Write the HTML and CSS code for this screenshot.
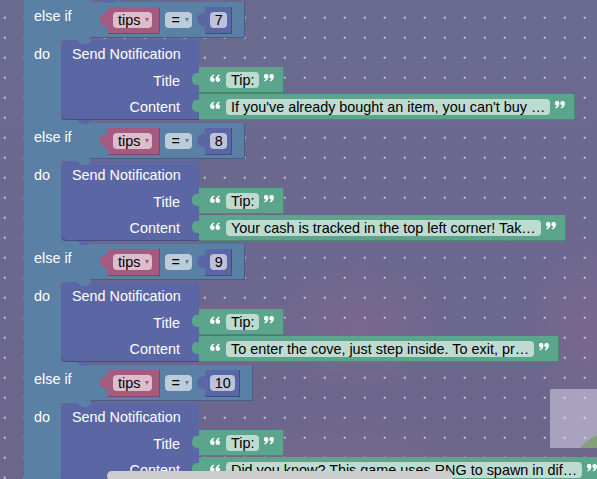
FILE: index.html
```html
<!DOCTYPE html>
<html>
<head>
<meta charset="utf-8">
<link rel="stylesheet" href="styles.css">
</head>
<body>
<div class="workspace">
  <div class="backdrop">
    <div class="hill-panel"><div class="hill"></div></div>
  </div>
  <div class="grid"></div>

  <div class="program">
    <div class="elseif first">
      <div class="head">else if</div>
      <div class="compare">
        <div class="var"><div class="field">tips<span class="arrow"></span></div></div>
        <div class="field op">=<span class="arrow"></span></div>
        <div class="num"><div class="field">7</div></div>
      </div>
    </div>
    <div class="do">
      <div class="spine">do</div>
      <div class="notify">
        <div class="notify-body">
          <div class="notify-title">Send Notification</div>
          <div class="label">Title</div>
          <div class="label">Content</div>
        </div>
        <div class="inputs">
          <div class="text"><svg class="q" viewBox="0 0 10 8"><path d="M0.1 5.6C0.1 3.2 1.6 1.6 3.8 0.6L4.3 1.5C3.2 2.2 2.6 2.8 2.4 3.4A2.3 2.3 0 1 1 0.1 5.6Z"/><path transform="translate(5.5 0)" d="M0.1 5.6C0.1 3.2 1.6 1.6 3.8 0.6L4.3 1.5C3.2 2.2 2.6 2.8 2.4 3.4A2.3 2.3 0 1 1 0.1 5.6Z"/></svg><span class="field">Tip:</span><svg class="q close" viewBox="0 0 10 8"><g transform="rotate(180 5 4)"><path d="M0.1 5.6C0.1 3.2 1.6 1.6 3.8 0.6L4.3 1.5C3.2 2.2 2.6 2.8 2.4 3.4A2.3 2.3 0 1 1 0.1 5.6Z"/><path transform="translate(5.5 0)" d="M0.1 5.6C0.1 3.2 1.6 1.6 3.8 0.6L4.3 1.5C3.2 2.2 2.6 2.8 2.4 3.4A2.3 2.3 0 1 1 0.1 5.6Z"/></g></svg></div>
          <div class="text"><svg class="q" viewBox="0 0 10 8"><path d="M0.1 5.6C0.1 3.2 1.6 1.6 3.8 0.6L4.3 1.5C3.2 2.2 2.6 2.8 2.4 3.4A2.3 2.3 0 1 1 0.1 5.6Z"/><path transform="translate(5.5 0)" d="M0.1 5.6C0.1 3.2 1.6 1.6 3.8 0.6L4.3 1.5C3.2 2.2 2.6 2.8 2.4 3.4A2.3 2.3 0 1 1 0.1 5.6Z"/></svg><span class="field">If you've already bought an item, you can't buy …</span><svg class="q close" viewBox="0 0 10 8"><g transform="rotate(180 5 4)"><path d="M0.1 5.6C0.1 3.2 1.6 1.6 3.8 0.6L4.3 1.5C3.2 2.2 2.6 2.8 2.4 3.4A2.3 2.3 0 1 1 0.1 5.6Z"/><path transform="translate(5.5 0)" d="M0.1 5.6C0.1 3.2 1.6 1.6 3.8 0.6L4.3 1.5C3.2 2.2 2.6 2.8 2.4 3.4A2.3 2.3 0 1 1 0.1 5.6Z"/></g></svg></div>
        </div>
      </div>
    </div>

    <div class="elseif">
      <div class="head">else if</div>
      <div class="compare">
        <div class="var"><div class="field">tips<span class="arrow"></span></div></div>
        <div class="field op">=<span class="arrow"></span></div>
        <div class="num"><div class="field">8</div></div>
      </div>
    </div>
    <div class="do">
      <div class="spine">do</div>
      <div class="notify">
        <div class="notify-body">
          <div class="notify-title">Send Notification</div>
          <div class="label">Title</div>
          <div class="label">Content</div>
        </div>
        <div class="inputs">
          <div class="text"><svg class="q" viewBox="0 0 10 8"><path d="M0.1 5.6C0.1 3.2 1.6 1.6 3.8 0.6L4.3 1.5C3.2 2.2 2.6 2.8 2.4 3.4A2.3 2.3 0 1 1 0.1 5.6Z"/><path transform="translate(5.5 0)" d="M0.1 5.6C0.1 3.2 1.6 1.6 3.8 0.6L4.3 1.5C3.2 2.2 2.6 2.8 2.4 3.4A2.3 2.3 0 1 1 0.1 5.6Z"/></svg><span class="field">Tip:</span><svg class="q close" viewBox="0 0 10 8"><g transform="rotate(180 5 4)"><path d="M0.1 5.6C0.1 3.2 1.6 1.6 3.8 0.6L4.3 1.5C3.2 2.2 2.6 2.8 2.4 3.4A2.3 2.3 0 1 1 0.1 5.6Z"/><path transform="translate(5.5 0)" d="M0.1 5.6C0.1 3.2 1.6 1.6 3.8 0.6L4.3 1.5C3.2 2.2 2.6 2.8 2.4 3.4A2.3 2.3 0 1 1 0.1 5.6Z"/></g></svg></div>
          <div class="text"><svg class="q" viewBox="0 0 10 8"><path d="M0.1 5.6C0.1 3.2 1.6 1.6 3.8 0.6L4.3 1.5C3.2 2.2 2.6 2.8 2.4 3.4A2.3 2.3 0 1 1 0.1 5.6Z"/><path transform="translate(5.5 0)" d="M0.1 5.6C0.1 3.2 1.6 1.6 3.8 0.6L4.3 1.5C3.2 2.2 2.6 2.8 2.4 3.4A2.3 2.3 0 1 1 0.1 5.6Z"/></svg><span class="field">Your cash is tracked in the top left corner! Tak…</span><svg class="q close" viewBox="0 0 10 8"><g transform="rotate(180 5 4)"><path d="M0.1 5.6C0.1 3.2 1.6 1.6 3.8 0.6L4.3 1.5C3.2 2.2 2.6 2.8 2.4 3.4A2.3 2.3 0 1 1 0.1 5.6Z"/><path transform="translate(5.5 0)" d="M0.1 5.6C0.1 3.2 1.6 1.6 3.8 0.6L4.3 1.5C3.2 2.2 2.6 2.8 2.4 3.4A2.3 2.3 0 1 1 0.1 5.6Z"/></g></svg></div>
        </div>
      </div>
    </div>

    <div class="elseif">
      <div class="head">else if</div>
      <div class="compare">
        <div class="var"><div class="field">tips<span class="arrow"></span></div></div>
        <div class="field op">=<span class="arrow"></span></div>
        <div class="num"><div class="field">9</div></div>
      </div>
    </div>
    <div class="do">
      <div class="spine">do</div>
      <div class="notify">
        <div class="notify-body">
          <div class="notify-title">Send Notification</div>
          <div class="label">Title</div>
          <div class="label">Content</div>
        </div>
        <div class="inputs">
          <div class="text"><svg class="q" viewBox="0 0 10 8"><path d="M0.1 5.6C0.1 3.2 1.6 1.6 3.8 0.6L4.3 1.5C3.2 2.2 2.6 2.8 2.4 3.4A2.3 2.3 0 1 1 0.1 5.6Z"/><path transform="translate(5.5 0)" d="M0.1 5.6C0.1 3.2 1.6 1.6 3.8 0.6L4.3 1.5C3.2 2.2 2.6 2.8 2.4 3.4A2.3 2.3 0 1 1 0.1 5.6Z"/></svg><span class="field">Tip:</span><svg class="q close" viewBox="0 0 10 8"><g transform="rotate(180 5 4)"><path d="M0.1 5.6C0.1 3.2 1.6 1.6 3.8 0.6L4.3 1.5C3.2 2.2 2.6 2.8 2.4 3.4A2.3 2.3 0 1 1 0.1 5.6Z"/><path transform="translate(5.5 0)" d="M0.1 5.6C0.1 3.2 1.6 1.6 3.8 0.6L4.3 1.5C3.2 2.2 2.6 2.8 2.4 3.4A2.3 2.3 0 1 1 0.1 5.6Z"/></g></svg></div>
          <div class="text"><svg class="q" viewBox="0 0 10 8"><path d="M0.1 5.6C0.1 3.2 1.6 1.6 3.8 0.6L4.3 1.5C3.2 2.2 2.6 2.8 2.4 3.4A2.3 2.3 0 1 1 0.1 5.6Z"/><path transform="translate(5.5 0)" d="M0.1 5.6C0.1 3.2 1.6 1.6 3.8 0.6L4.3 1.5C3.2 2.2 2.6 2.8 2.4 3.4A2.3 2.3 0 1 1 0.1 5.6Z"/></svg><span class="field">To enter the cove, just step inside. To exit, pr…</span><svg class="q close" viewBox="0 0 10 8"><g transform="rotate(180 5 4)"><path d="M0.1 5.6C0.1 3.2 1.6 1.6 3.8 0.6L4.3 1.5C3.2 2.2 2.6 2.8 2.4 3.4A2.3 2.3 0 1 1 0.1 5.6Z"/><path transform="translate(5.5 0)" d="M0.1 5.6C0.1 3.2 1.6 1.6 3.8 0.6L4.3 1.5C3.2 2.2 2.6 2.8 2.4 3.4A2.3 2.3 0 1 1 0.1 5.6Z"/></g></svg></div>
        </div>
      </div>
    </div>

    <div class="elseif">
      <div class="head">else if</div>
      <div class="compare">
        <div class="var"><div class="field">tips<span class="arrow"></span></div></div>
        <div class="field op">=<span class="arrow"></span></div>
        <div class="num"><div class="field">10</div></div>
      </div>
    </div>
    <div class="do">
      <div class="spine">do</div>
      <div class="notify">
        <div class="notify-body">
          <div class="notify-title">Send Notification</div>
          <div class="label">Title</div>
          <div class="label">Content</div>
        </div>
        <div class="inputs">
          <div class="text"><svg class="q" viewBox="0 0 10 8"><path d="M0.1 5.6C0.1 3.2 1.6 1.6 3.8 0.6L4.3 1.5C3.2 2.2 2.6 2.8 2.4 3.4A2.3 2.3 0 1 1 0.1 5.6Z"/><path transform="translate(5.5 0)" d="M0.1 5.6C0.1 3.2 1.6 1.6 3.8 0.6L4.3 1.5C3.2 2.2 2.6 2.8 2.4 3.4A2.3 2.3 0 1 1 0.1 5.6Z"/></svg><span class="field">Tip:</span><svg class="q close" viewBox="0 0 10 8"><g transform="rotate(180 5 4)"><path d="M0.1 5.6C0.1 3.2 1.6 1.6 3.8 0.6L4.3 1.5C3.2 2.2 2.6 2.8 2.4 3.4A2.3 2.3 0 1 1 0.1 5.6Z"/><path transform="translate(5.5 0)" d="M0.1 5.6C0.1 3.2 1.6 1.6 3.8 0.6L4.3 1.5C3.2 2.2 2.6 2.8 2.4 3.4A2.3 2.3 0 1 1 0.1 5.6Z"/></g></svg></div>
          <div class="text"><svg class="q" viewBox="0 0 10 8"><path d="M0.1 5.6C0.1 3.2 1.6 1.6 3.8 0.6L4.3 1.5C3.2 2.2 2.6 2.8 2.4 3.4A2.3 2.3 0 1 1 0.1 5.6Z"/><path transform="translate(5.5 0)" d="M0.1 5.6C0.1 3.2 1.6 1.6 3.8 0.6L4.3 1.5C3.2 2.2 2.6 2.8 2.4 3.4A2.3 2.3 0 1 1 0.1 5.6Z"/></svg><span class="field">Did you know? This game uses RNG to spawn in dif…</span><svg class="q close" viewBox="0 0 10 8"><g transform="rotate(180 5 4)"><path d="M0.1 5.6C0.1 3.2 1.6 1.6 3.8 0.6L4.3 1.5C3.2 2.2 2.6 2.8 2.4 3.4A2.3 2.3 0 1 1 0.1 5.6Z"/><path transform="translate(5.5 0)" d="M0.1 5.6C0.1 3.2 1.6 1.6 3.8 0.6L4.3 1.5C3.2 2.2 2.6 2.8 2.4 3.4A2.3 2.3 0 1 1 0.1 5.6Z"/></g></svg></div>
        </div>
      </div>
    </div>
  </div>

  <div class="scrollbar"></div>
</div>
</body>
</html>
```

FILE: styles.css
```css
* { box-sizing: border-box; }
html, body { margin: 0; padding: 0; }
body {
  width: 597px;
  height: 479px;
  overflow: hidden;
  font-family: "Liberation Sans", Arial, sans-serif;
  font-size: 14.4px;
}

.workspace {
  position: relative;
  width: 597px;
  height: 479px;
  overflow: hidden;
  background: #6b6890;
}

.backdrop {
  position: absolute;
  inset: 0;
  background:
    radial-gradient(ellipse 90px 70px at 360px 330px, rgba(150, 105, 145, 0.35), transparent),
    radial-gradient(ellipse 70px 90px at 590px 330px, rgba(150, 105, 145, 0.3), transparent),
    radial-gradient(ellipse 120px 60px at 350px 470px, rgba(150, 105, 145, 0.25), transparent),
    linear-gradient(180deg, #6a6a8f 0%, #6c678e 60%, #6d668b 100%);
}

.hill-panel {
  position: absolute;
  left: 550px;
  top: 389px;
  width: 47px;
  height: 59px;
  background: #a8a2bf;
  overflow: hidden;
}
.hill {
  position: absolute;
  left: 22px;
  top: 42px;
  width: 90px;
  height: 80px;
  border-radius: 50%;
  background: #86a07c;
}

.grid {
  position: absolute;
  inset: 0;
  background-image: radial-gradient(circle, rgba(220, 220, 235, 0.8) 0.8px, transparent 1.3px);
  background-size: 20px 20px;
  background-position: -5.3px 7.7px;
}

.program {
  position: relative;
  margin-top: -1px;
  padding-left: 24px;
  color: #fff;
}

/* else-if rows */
.elseif {
  position: relative;
  display: flex;
  height: 41px;
}
.elseif.first::before {
  content: "";
  position: absolute;
  left: 77px;
  top: 0;
  width: 15px;
  height: 4px;
  background: #5b67a5;
  clip-path: polygon(0 0, 100% 0, 70% 100%, 30% 100%);
  z-index: 2;
}
.elseif .head {
  flex: none;
  width: 66px;
  background: #5b80a5;
  padding: 9px 0 0 10px;
  line-height: 16px;
  white-space: nowrap;
}
.compare {
  flex: none;
  position: relative;
  margin-top: 3px;
  height: 36px;
  background: #5b80a5;
  display: flex;
  align-items: center;
  padding: 0 13px 0 18px;
  box-shadow: inset -1px -1px 0 rgba(40, 60, 90, 0.45);
}

.field {
  flex: none;
  height: 16px;
  line-height: 16px;
  border-radius: 4px;
  padding: 0 5px;
  color: #000;
  background: rgba(255, 255, 255, 0.6);
  display: flex;
  align-items: center;
  white-space: nowrap;
}
.arrow {
  width: 0;
  height: 0;
  border-left: 2.5px solid transparent;
  border-right: 2.5px solid transparent;
  border-top: 4px solid currentColor;
  margin-left: 4.5px;
}

.var {
  position: relative;
  height: 27px;
  background: #a55b80;
  padding: 0 8px 0 5px;
  display: flex;
  align-items: center;
  margin-right: 5px;
  box-shadow: inset -1px -1px 0 rgba(90, 40, 60, 0.45);
}
.var::before,
.num::before {
  content: "";
  position: absolute;
  left: -8px;
  top: 6px;
  width: 8px;
  height: 13px;
  border-radius: 6px 0 0 6px;
}
.var::before { background: #a55b80; }
.var .field { padding: 0 3.5px 0 5px; }
.var .arrow { color: #a55b80; }

.op { padding: 0 3px 0 6px; }
.op .arrow { color: #5b80a5; margin-left: 5.5px; }

.num {
  position: relative;
  height: 27px;
  background: #5b67a5;
  padding: 0 5px;
  display: flex;
  align-items: center;
  margin-left: 13px;
  box-shadow: inset -1px -1px 0 rgba(40, 45, 90, 0.45);
}
.num::before { background: #5b67a5; }
.num .field { padding: 0 4.5px; }

/* do rows */
.do {
  display: flex;
  height: 80px;
}
.do .spine {
  flex: none;
  width: 37px;
  background: #5b80a5;
  padding: 6px 0 0 10px;
  line-height: 16px;
}
.notify {
  flex: none;
  display: flex;
}
.notify-body {
  flex: none;
  position: relative;
  width: 138px;
  height: 80px;
  background: #5b67a5;
  border-radius: 8px 0 0 6px;
  padding-top: 6px;
  box-shadow: inset 0 -1px 0 rgba(40, 45, 90, 0.45);
}
.notify-body::before,
.notify-body::after {
  content: "";
  position: absolute;
  left: 16px;
  width: 15px;
  height: 4px;
  clip-path: polygon(0 0, 100% 0, 70% 100%, 30% 100%);
}
.notify-body::before { top: 0; background: #5b80a5; }
.notify-body::after { top: 100%; background: #5b67a5; z-index: 2; }

.notify-title {
  padding-left: 11px;
  line-height: 16px;
  height: 22px;
  white-space: nowrap;
}
.label {
  height: 26px;
  line-height: 26px;
  text-align: right;
  padding-right: 19px;
}

.inputs {
  flex: none;
  display: flex;
  flex-direction: column;
  align-items: flex-start;
  gap: 1px;
  padding-top: 27px;
}
.text {
  flex: none;
  position: relative;
  height: 26px;
  background: #5ba58c;
  display: flex;
  align-items: center;
  padding: 0 10px 0 11px;
  box-shadow: inset 0 -1px 0 rgba(40, 90, 70, 0.35), inset -1px 0 0 rgba(40, 90, 70, 0.35);
}
.text::before {
  content: "";
  position: absolute;
  left: -7px;
  top: 6px;
  width: 7px;
  height: 12px;
  background: #5ba58c;
  border-radius: 5px 0 0 5px;
}
.q {
  flex: none;
  width: 10px;
  height: 8px;
  fill: #fff;
  margin: 0 6px 4px 0;
}
.q.close { margin: 0 0 4px 5px; }

.scrollbar {
  position: absolute;
  left: 107px;
  top: 471px;
  width: 346px;
  height: 10px;
  border-radius: 5px;
  background: #cdcdcd;
}
```
